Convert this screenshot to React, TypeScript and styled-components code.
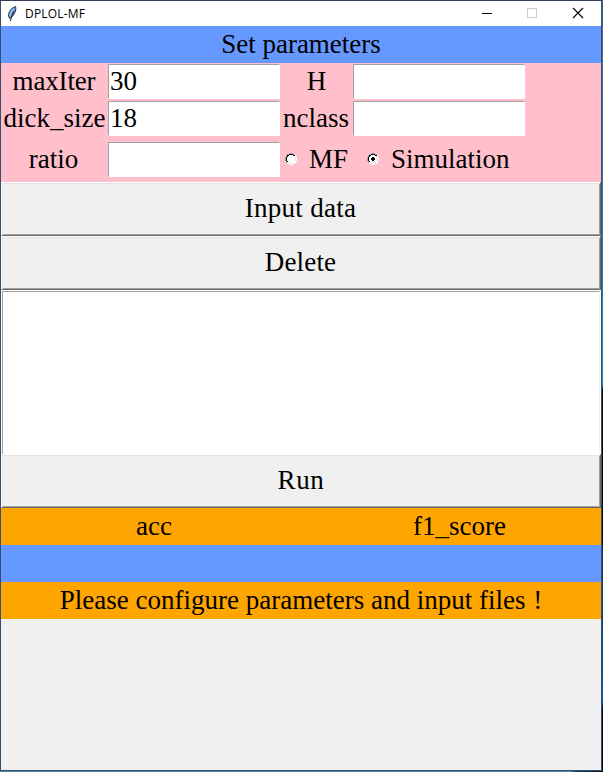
import React from "react";
import styled, { createGlobalStyle } from "styled-components";

const GlobalStyle = createGlobalStyle`
  * { box-sizing: border-box; }
  html, body { margin: 0; padding: 0; overflow: hidden; }
`;

const Desktop = styled.div`
  width: 603px;
  height: 772px;
  padding: 0 1px 1px 0;
  background:
    linear-gradient(90deg, #4a87a8 0, #4a87a8 570px, #173b5c 576px, #06101f 603px) 0 771px / 603px 1px no-repeat,
    linear-gradient(180deg, #3c6291 0, #3f77a2 180px, #2581ba 300px, #2581ba 385px, #05070b 390px, #05070b 538px,
      #123562 550px, #0b4a8a 670px, #075fa8 700px, #05070f 709px, #05070f 772px);
`;

const Window = styled.div`
  width: 602px;
  height: 771px;
  border: 1px solid #34506a;
  border-top-color: #34405c;
  background: #f0f0f0;
  overflow: hidden;
  font-family: "Liberation Serif", serif;
  font-size: 27px;
  color: #000;
`;

const TitleBar = styled.header`
  display: flex;
  align-items: center;
  height: 25px;
  padding-left: 6px;
  background: #fff;
  font-family: "Open Sans", sans-serif;
  font-size: 12px;
`;

const Title = styled.span`
  flex: 1;
  padding: 0 0 1px 6px;
  letter-spacing: 0.2px;
`;

const WindowIcon = styled.svg`
  display: block;
  width: 12px;
  height: 17px;
`;

const Controls = styled.div`
  display: flex;
`;

const Control = styled.svg`
  display: block;
  width: 46px;
  height: 25px;
`;

const Band = styled.div<{ $tone: "blue" | "orange" }>`
  display: flex;
  align-items: center;
  justify-content: center;
  height: 37px;
  background: ${(p) => (p.$tone === "blue" ? "#6699ff" : "#ffa500")};
`;

const ResultBand = styled(Band)`
  display: grid;
  grid-template-columns: 306px 305px;
  justify-content: start;
  justify-items: center;
`;

const Text = styled.span<{ $track?: number; $nudge?: number }>`
  white-space: pre;
  line-height: 31px;
  letter-spacing: ${(p) => p.$track ?? 0}px;
  padding-right: ${(p) => p.$nudge ?? 0}px;
`;

const Parameters = styled.section`
  display: grid;
  grid-template-columns: 107px 172px 73px 172px;
  grid-template-rows: 37px 37px 45px;
  align-items: center;
  height: 119px;
  background: #ffc0cb;
`;

const Label = styled.label`
  text-align: center;
  line-height: 31px;
`;

const Entry = styled.input`
  width: 172px;
  height: 35px;
  padding: 0 0 0 1px;
  border: 1px solid;
  border-color: #a0a0a0 #fff #fff #a0a0a0;
  border-radius: 0;
  outline: none;
  background: #fff;
  font: inherit;
  color: inherit;
`;

const RadioRow = styled.div`
  display: flex;
  grid-column: 3 / 5;
  align-items: center;
  padding-left: 5px;
`;

const Choice = styled.div<{ $width: number }>`
  display: flex;
  align-items: center;
  width: ${(p) => p.$width}px;
  gap: 12px;
`;

const Dial = styled.svg`
  display: block;
  flex: none;
  width: 12px;
  height: 12px;
  margin-top: -1px;
`;

const PushButton = styled.button`
  display: flex;
  align-items: center;
  justify-content: center;
  width: 600px;
  height: 54px;
  padding: 0 0 2px;
  border: 1px solid;
  border-color: #fff #696969 #696969 #fff;
  border-radius: 0;
  background: #f0f0f0;
  box-shadow: inset 1px 1px #e3e3e3, inset -1px -1px #a0a0a0;
  font: inherit;
  color: inherit;
`;

const ListBox = styled.div`
  height: 164px;
  padding: 1px 1px 0;
  background: #fff;

  &::before {
    content: "";
    display: block;
    height: 163px;
    border: 1px solid;
    border-color: #a0a0a0 #f0f0f0 #f0f0f0 #a0a0a0;
  }
`;

const Radio = ({ checked = false }: { checked?: boolean }) => (
  <Dial viewBox="0 0 12 12" shapeRendering="crispEdges">
    <path d="M4 1h4v1h2v2h1v4h-1v2H8v1H4v-1H2V8H1V4h1V2h2z" fill="#fff" />
    <path d="M4 0h4v1H4zM2 1h2v1H2zM8 1h2v1H8zM1 2h1v2H1zM0 4h1v4H0zM1 8h1v2H1z" fill="#a0a0a0" />
    <path d="M4 1h4v1H4zM2 2h2v1H2zM8 2h2v1H8zM2 3h1v1H2zM1 4h1v4H1zM2 8h1v1H2z" fill="#000" />
    <path d="M10 2h1v2h-1zM11 4h1v4h-1zM10 8h1v2h-1zM8 10h2v1H8zM4 11h4v1H4zM2 10h2v1H2z" fill="#fff" />
    <path d="M9 3h1v1H9zM10 4h1v4h-1zM9 8h1v1H9zM8 9h1v1H8zM4 10h4v1H4zM3 9h1v1H3z" fill="#e3e3e3" />
    {checked && <path d="M5 4h2v1h1v2H7v1H5V7H4V5h1z" fill="#000" />}
  </Dial>
);

export default function App() {
  return (
    <>
      <GlobalStyle />
      <Desktop>
        <Window>
          <TitleBar>
            <WindowIcon viewBox="0 0 12 17">
              <path d="M8.500 1.500C5 2.500 2 6 1.500 9.500c-.1 1.600.3 2.800 1 4 3-1.500 5.500-5 6.200-8.500.3-1.500.2-2.500-.2-3.500z" fill="#5f9bd8" stroke="#1c2a3c" strokeWidth="0.900" />
              <path d="M6.500 4C4.500 6 3.200 8.500 2.800 11" fill="none" stroke="#a9d2f5" strokeWidth="1.200" />
              <path d="M7 6C5.800 8.500 4.500 11 3.400 16" fill="none" stroke="#0b0f16" strokeWidth="0.900" />
            </WindowIcon>
            <Title>DPLOL-MF</Title>
            <Controls>
              <Control viewBox="0 0 46 25" shapeRendering="crispEdges">
                <path d="M19 12h10v1H19z" fill="#000" />
              </Control>
              <Control viewBox="0 0 46 25" shapeRendering="crispEdges">
                <path d="M18.500 7.500h9v9h-9z" fill="none" stroke="#ccc" />
              </Control>
              <Control viewBox="0 0 46 25">
                <path d="M18 7l10 10M28 7L18 17" stroke="#000" strokeWidth="1.100" />
              </Control>
            </Controls>
          </TitleBar>
          <Band $tone="blue">
            <Text>Set parameters</Text>
          </Band>
          <Parameters>
            <Label><Text $track={-0.15} $nudge={1}>maxIter</Text></Label>
            <Entry defaultValue="30" />
            <Label><Text>H</Text></Label>
            <Entry />
            <Label><Text>dick_size</Text></Label>
            <Entry defaultValue="18" />
            <Label><Text $nudge={1}>nclass</Text></Label>
            <Entry />
            <Label><Text $nudge={2}>ratio</Text></Label>
            <Entry />
            <RadioRow>
              <Choice $width={82}>
                <Radio />
                <Text>MF</Text>
              </Choice>
              <Choice $width={150}>
                <Radio checked />
                <Text>Simulation</Text>
              </Choice>
            </RadioRow>
          </Parameters>
          <PushButton><Text $track={0.28} $nudge={1}>Input data</Text></PushButton>
          <PushButton><Text $track={0.15} $nudge={1}>Delete</Text></PushButton>
          <ListBox />
          <PushButton><Text $track={0.6}>Run</Text></PushButton>
          <ResultBand $tone="orange">
            <Text>acc</Text>
            <Text>f1_score</Text>
          </ResultBand>
          <Band $tone="blue" />
          <Band $tone="orange">
            <Text $nudge={1}>Please configure parameters and input files</Text>
            <Text> !</Text>
          </Band>
        </Window>
      </Desktop>
    </>
  );
}
